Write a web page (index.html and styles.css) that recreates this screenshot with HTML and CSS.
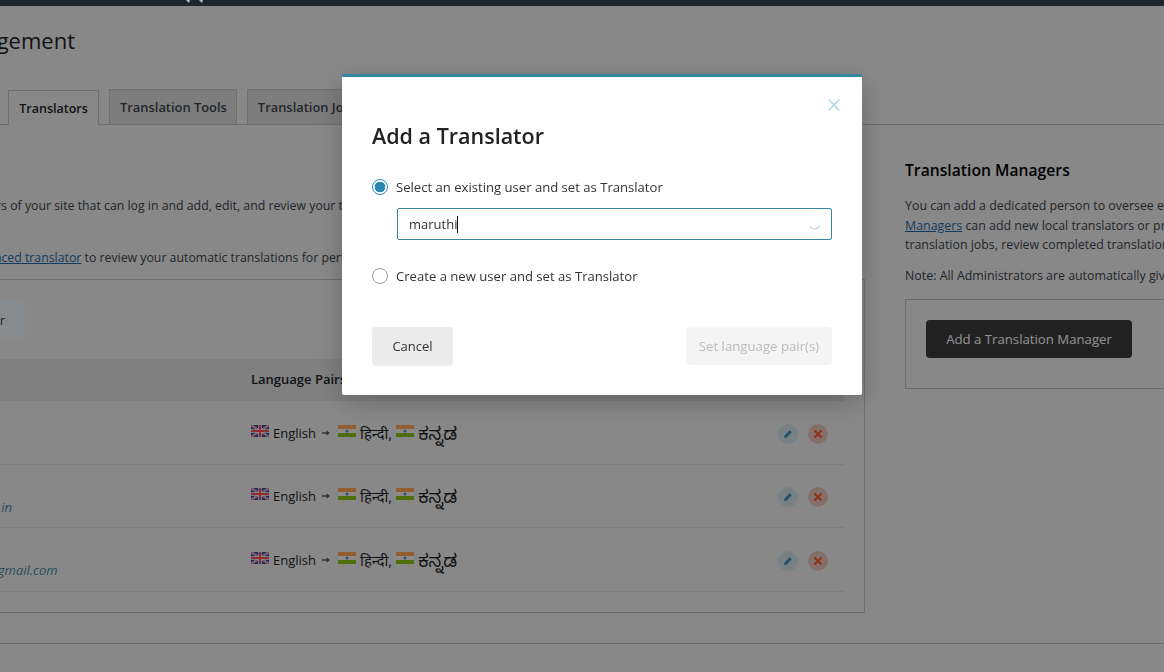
FILE: index.html
```html
<!DOCTYPE html>
<html lang="en">
<head>
<meta charset="utf-8">
<title>Translation Management</title>
<link rel="stylesheet" href="styles.css">
</head>
<body>
<div class="topbar">
  <svg class="topbar-mark" width="20" height="6" viewBox="0 0 20 6" aria-hidden="true"><path d="M0 0h4l-1 3zM13 0h4l-1 3z" fill="#b9bcbf"/></svg>
</div>
<div class="page">
  <h1 class="page-title">Translation Management</h1>
  <nav class="tabs">
    <a class="tab tab-active">Translators</a>
    <a class="tab">Translation Tools</a>
    <a class="tab">Translation Jobs</a>
  </nav>
  <div class="columns">
    <main class="col-left">
      <p class="intro intro-one">Translators are users of your site that can log in and add, edit, and review your translations.</p>
      <p class="intro intro-two">You can use an <a class="link">advanced translator</a> to review your automatic translations for perfection.</p>
      <section class="panel">
        <button class="btn-add" type="button">Add a Translator</button>
        <table class="people">
          <colgroup><col class="col-name"><col class="col-pairs"><col class="col-actions"></colgroup>
          <thead>
            <tr><th>Name</th><th>Language Pairs</th><th></th></tr>
          </thead>
          <tbody>
            <tr class="row-one">
              <td></td>
              <td><span class="pairs"><svg class="flag"><use href="#uk"/></svg> <span>English</span> <svg class="arrow" width="8" height="6" viewBox="0 0 8 6"><path d="M0 3h5" stroke="#555" stroke-width="1.4"/><path d="M4.5 .6L8 3 4.5 5.4z" fill="#555"/></svg> <svg class="flag"><use href="#in"/></svg> <span class="deva">हिन्दी,</span> <svg class="flag"><use href="#in"/></svg> <span class="kann">ಕನ್ನಡ</span></span></td>
              <td><div class="actions"><span class="act act-edit"><svg width="10" height="10"><use href="#pen"/></svg></span><span class="act act-del"><svg width="10" height="10"><use href="#cross"/></svg></span></div></td>
            </tr>
            <tr class="row-two">
              <td><span class="email email-two">editor.translator@sample.in</span></td>
              <td><span class="pairs"><svg class="flag"><use href="#uk"/></svg> <span>English</span> <svg class="arrow" width="8" height="6" viewBox="0 0 8 6"><path d="M0 3h5" stroke="#555" stroke-width="1.4"/><path d="M4.5 .6L8 3 4.5 5.4z" fill="#555"/></svg> <svg class="flag"><use href="#in"/></svg> <span class="deva">हिन्दी,</span> <svg class="flag"><use href="#in"/></svg> <span class="kann">ಕನ್ನಡ</span></span></td>
              <td><div class="actions"><span class="act act-edit"><svg width="10" height="10"><use href="#pen"/></svg></span><span class="act act-del"><svg width="10" height="10"><use href="#cross"/></svg></span></div></td>
            </tr>
            <tr class="row-three">
              <td><span class="email email-three">maruthi.translator@gmail.com</span></td>
              <td><span class="pairs"><svg class="flag"><use href="#uk"/></svg> <span>English</span> <svg class="arrow" width="8" height="6" viewBox="0 0 8 6"><path d="M0 3h5" stroke="#555" stroke-width="1.4"/><path d="M4.5 .6L8 3 4.5 5.4z" fill="#555"/></svg> <svg class="flag"><use href="#in"/></svg> <span class="deva">हिन्दी,</span> <svg class="flag"><use href="#in"/></svg> <span class="kann">ಕನ್ನಡ</span></span></td>
              <td><div class="actions"><span class="act act-edit"><svg width="10" height="10"><use href="#pen"/></svg></span><span class="act act-del"><svg width="10" height="10"><use href="#cross"/></svg></span></div></td>
            </tr>
          </tbody>
        </table>
      </section>
    </main>
    <aside class="col-right">
      <h2 class="side-title">Translation Managers</h2>
      <p class="side-text">You can add a dedicated person to oversee every translation. Translation<br><a class="link">Managers</a> can add new local translators or pro translators, send content to<br>translation jobs, review completed translations and more.</p>
      <p class="side-note">Note: All Administrators are automatically given this role.</p>
      <div class="side-box"><button class="btn-dark" type="button">Add a Translation Manager</button></div>
    </aside>
  </div>
  <div class="foot-line"></div>
</div>

<div class="overlay">
  <div class="modal" role="dialog">
    <svg class="modal-close" width="12" height="12" viewBox="0 0 12 12" aria-hidden="true"><path d="M.7.7l10.6 10.6M11.3.7L.7 11.3" stroke="#b4dbe5" stroke-width="1.7" fill="none"/></svg>
    <h2 class="modal-title">Add a Translator</h2>
    <label class="radio-row"><input class="radio" type="radio" name="who" checked> Select an existing user and set as Translator</label>
    <div class="search">
      <input class="search-input" type="text" value="maruthi">
      <span class="caret"></span>
      <svg class="spinner" width="12" height="6" viewBox="0 0 12 6" aria-hidden="true"><path d="M1 1.5c2 3 7 3 9.5 0" stroke="#c9c9c9" stroke-width="1.2" fill="none"/></svg>
    </div>
    <label class="radio-row radio-second"><input class="radio" type="radio" name="who"> Create a new user and set as Translator</label>
    <div class="modal-actions">
      <button class="btn-cancel" type="button">Cancel</button>
      <button class="btn-disabled" type="button">Set language pair(s)</button>
    </div>
  </div>
</div>

<svg class="defs" width="0" height="0" aria-hidden="true">
  <defs>
    <symbol id="uk" viewBox="0 0 18 12">
      <rect width="18" height="12" fill="#2a4fa8"/>
      <path d="M0 0l18 12M18 0L0 12" stroke="#fff" stroke-width="2"/>
      <path d="M0 0l18 12M18 0L0 12" stroke="#ff4a55" stroke-width="1"/>
      <path d="M9 0v12M0 6h18" stroke="#fff" stroke-width="3.4"/>
      <path d="M9 0v12M0 6h18" stroke="#ff4a55" stroke-width="2"/>
    </symbol>
    <symbol id="in" viewBox="0 0 18 12">
      <rect width="18" height="4" fill="#ffa754"/>
      <rect y="4" width="18" height="4" fill="#f4f4f4"/>
      <rect y="8" width="18" height="4" fill="#8cc014"/>
      <circle cx="9" cy="6" r="1.5" fill="#6d7fa8"/>
    </symbol>
    <symbol id="pen" viewBox="0 0 10 10">
      <path d="M1 9l.6-2.6L6.8 1.2l2 2L3.6 8.4z" fill="#2f8fb0"/>
    </symbol>
    <symbol id="cross" viewBox="0 0 10 10">
      <path d="M1.5 1.5l7 7M8.5 1.5l-7 7" stroke="#ff5a28" stroke-width="2" fill="none"/>
    </symbol>
  </defs>
</svg>
</body>
</html>
```

FILE: styles.css
```css
* { box-sizing: border-box; }

html, body {
  margin: 0;
  height: 672px;
  overflow: hidden;
}

body {
  background: #f0f0f1;
  color: #3c434a;
  font-family: "Open Sans", "Noto Sans", "Noto Sans Devanagari", "Noto Sans Kannada", sans-serif;
  font-size: 13px;
  line-height: 20px;
}

.topbar {
  position: relative;
  z-index: 20;
  height: 6px;
  background: #1f262b;
  padding-left: 186px;
  overflow: hidden;
}

.topbar-mark { display: block; }

.page {
  margin-left: -170px;
  width: 1500px;
}

.page-title {
  margin: 0 0 0 -12px;
  height: 59px;
  padding-top: 18px;
  font-size: 22px;
  line-height: 32px;
  font-weight: 400;
  color: #1d2327;
  white-space: nowrap;
}

.tabs {
  display: flex;
  align-items: flex-end;
  gap: 10px;
  height: 60px;
  padding-left: 178px;
  border-bottom: 1px solid #c3c4c7;
}

.tab {
  display: block;
  height: 35px;
  padding: 7px 9px 0 10px;
  border: 1px solid #c3c4c7;
  border-bottom: 0;
  background: #dcdcde;
  color: #3c434a;
  font-size: 12.9px;
  font-weight: 600;
  white-space: nowrap;
}

.tab-active {
  width: 91px;
  height: 35px;
  margin-bottom: -1px;
  padding: 8px 0 0;
  background: #f0f0f1;
  color: #1d2327;
  font-size: 12.5px;
  text-align: center;
}

.columns {
  display: grid;
  grid-template-columns: 1035px 400px;
  column-gap: 40px;
}

.col-left { padding-top: 71px; }

.intro {
  margin: 0;
  font-size: 12.3px;
  white-space: nowrap;
}

.intro-one { padding-left: 56px; }

.intro-two {
  margin-top: 32px;
  padding-left: 47px;
  height: 31px;
}

.link {
  color: #1f69a6;
  text-decoration: underline;
}

.panel {
  border: 1px solid #c3c4c7;
  height: 334px;
  padding: 20px;
}

.btn-add {
  display: block;
  width: 174px;
  height: 39px;
  padding: 0 20px 0 0;
  border: 0;
  border-radius: 4px;
  background: #eef5f8;
  color: #3c434a;
  font: inherit;
  text-align: right;
}

.people {
  width: 100%;
  margin-top: 20px;
  table-layout: fixed;
  border-collapse: collapse;
}

.col-name { width: 400px; }
.col-actions { width: 90px; }

.people th {
  height: 41px;
  padding: 0;
  background: #e2e2e3;
  border-bottom: 1px solid #dcdcde;
  text-align: left;
  font-weight: 600;
  font-size: 13px;
  color: #1d2327;
}

.people td {
  padding: 0;
  border-bottom: 1px solid #dcdcde;
  color: #3c434a;
  vertical-align: top;
}

.row-one td { height: 64px; padding-top: 22px; }
.row-two td { height: 63px; padding-top: 21px; }
.row-three td { height: 64px; padding-top: 22px; }

.pairs {
  display: flex;
  align-items: center;
  gap: 4px;
  height: 20px;
  white-space: nowrap;
  font-size: 13px;
  color: #1d2327;
}

.flag {
  width: 18px;
  height: 12px;
  margin-top: -3px;
  flex: none;
}

.arrow {
  flex: none;
  margin: 0 4px 0 2px;
}

.deva {
  font-size: 15px;
}

.kann {
  font-size: 18px;
}

.actions {
  display: flex;
  justify-content: flex-end;
  gap: 10px;
  margin-top: 1px;
  padding-right: 16px;
}

.act {
  width: 20px;
  height: 20px;
  border-radius: 50%;
  display: flex;
  align-items: center;
  justify-content: center;
}

.act-edit { background: #d3e2e9; }
.act-del { background: #e8c4bc; }

.email {
  display: block;
  margin-top: 11px;
  font-style: italic;
  white-space: nowrap;
  color: #4a8aa0;
}

.email-three {
  margin-top: 10px;
  padding-left: 29px;
}

.col-right { padding-top: 35px; }

.side-title {
  margin: 0;
  font-size: 15.7px;
  line-height: 20px;
  font-weight: 600;
  color: #000;
  white-space: nowrap;
}

.side-text {
  margin: 16px 0 0;
  font-size: 12.4px;
  line-height: 19.5px;
  white-space: nowrap;
}

.side-note {
  margin: 11px 0 0;
  font-size: 12.4px;
  white-space: nowrap;
}

.side-box {
  margin-top: 13px;
  height: 90px;
  padding: 20px;
  border: 1px solid #c3c4c7;
}

.btn-dark {
  display: block;
  width: 206px;
  height: 38px;
  border: 0;
  border-radius: 4px;
  background: #3a3a3a;
  color: #fff;
  font: inherit;
  font-size: 13.2px;
}

.foot-line {
  margin-top: 30px;
  border-top: 1px solid #c3c4c7;
}

.overlay {
  position: fixed;
  inset: 0;
  z-index: 10;
  background: rgba(0, 0, 0, .43);
}

.modal {
  position: absolute;
  left: 342px;
  top: 74px;
  width: 520px;
  height: 321px;
  padding: 45px 30px 0;
  background: #fff;
  border-top: 3px solid #33879e;
  border-radius: 2px;
  box-shadow: 0 7px 30px rgba(0, 0, 0, .24);
  color: #333;
}

.modal-close {
  position: absolute;
  right: 22px;
  top: 22px;
}

.modal-title {
  margin: 0;
  font-size: 21.5px;
  line-height: 28px;
  font-weight: 600;
  color: #222;
}

.radio-row {
  display: flex;
  align-items: center;
  gap: 8px;
  margin-top: 27px;
  height: 20px;
  white-space: nowrap;
  font-size: 13.1px;
  color: #333;
}

.radio-second { margin-top: 26px; }

.radio {
  appearance: none;
  width: 16px;
  height: 16px;
  margin: 0;
  flex: none;
  border: 1px solid #999;
  border-radius: 50%;
  background: #fff;
}

.radio:checked {
  border-color: #2a87b5;
  background: radial-gradient(circle, #2a87b5 0 5px, #fff 5.6px);
}

.search {
  position: relative;
  margin: 11px 0 0 25px;
  width: 435px;
  height: 32px;
}

.search-input {
  display: block;
  width: 100%;
  height: 100%;
  padding: 0 11px;
  border: 1px solid #33879e;
  border-radius: 2px;
  background: #fff;
  color: #333;
  font: inherit;
  outline: 0;
}

.caret {
  position: absolute;
  left: 60px;
  top: 8px;
  width: 1px;
  height: 17px;
  background: #111;
}

.spinner {
  position: absolute;
  right: 11px;
  top: 17px;
}

.modal-actions {
  display: flex;
  justify-content: space-between;
  margin-top: 41px;
}

.btn-cancel {
  width: 81px;
  height: 38px;
  border: 0;
  border-radius: 4px;
  background: #ebebeb;
  box-shadow: 0 1px 1px rgba(0, 0, 0, .06);
  color: #333;
  font: inherit;
}

.btn-disabled {
  width: 146px;
  height: 38px;
  border: 0;
  border-radius: 4px;
  background: #f4f4f4;
  color: #bbb;
  font: inherit;
  font-size: 13.2px;
}

.defs { position: absolute; }
```
